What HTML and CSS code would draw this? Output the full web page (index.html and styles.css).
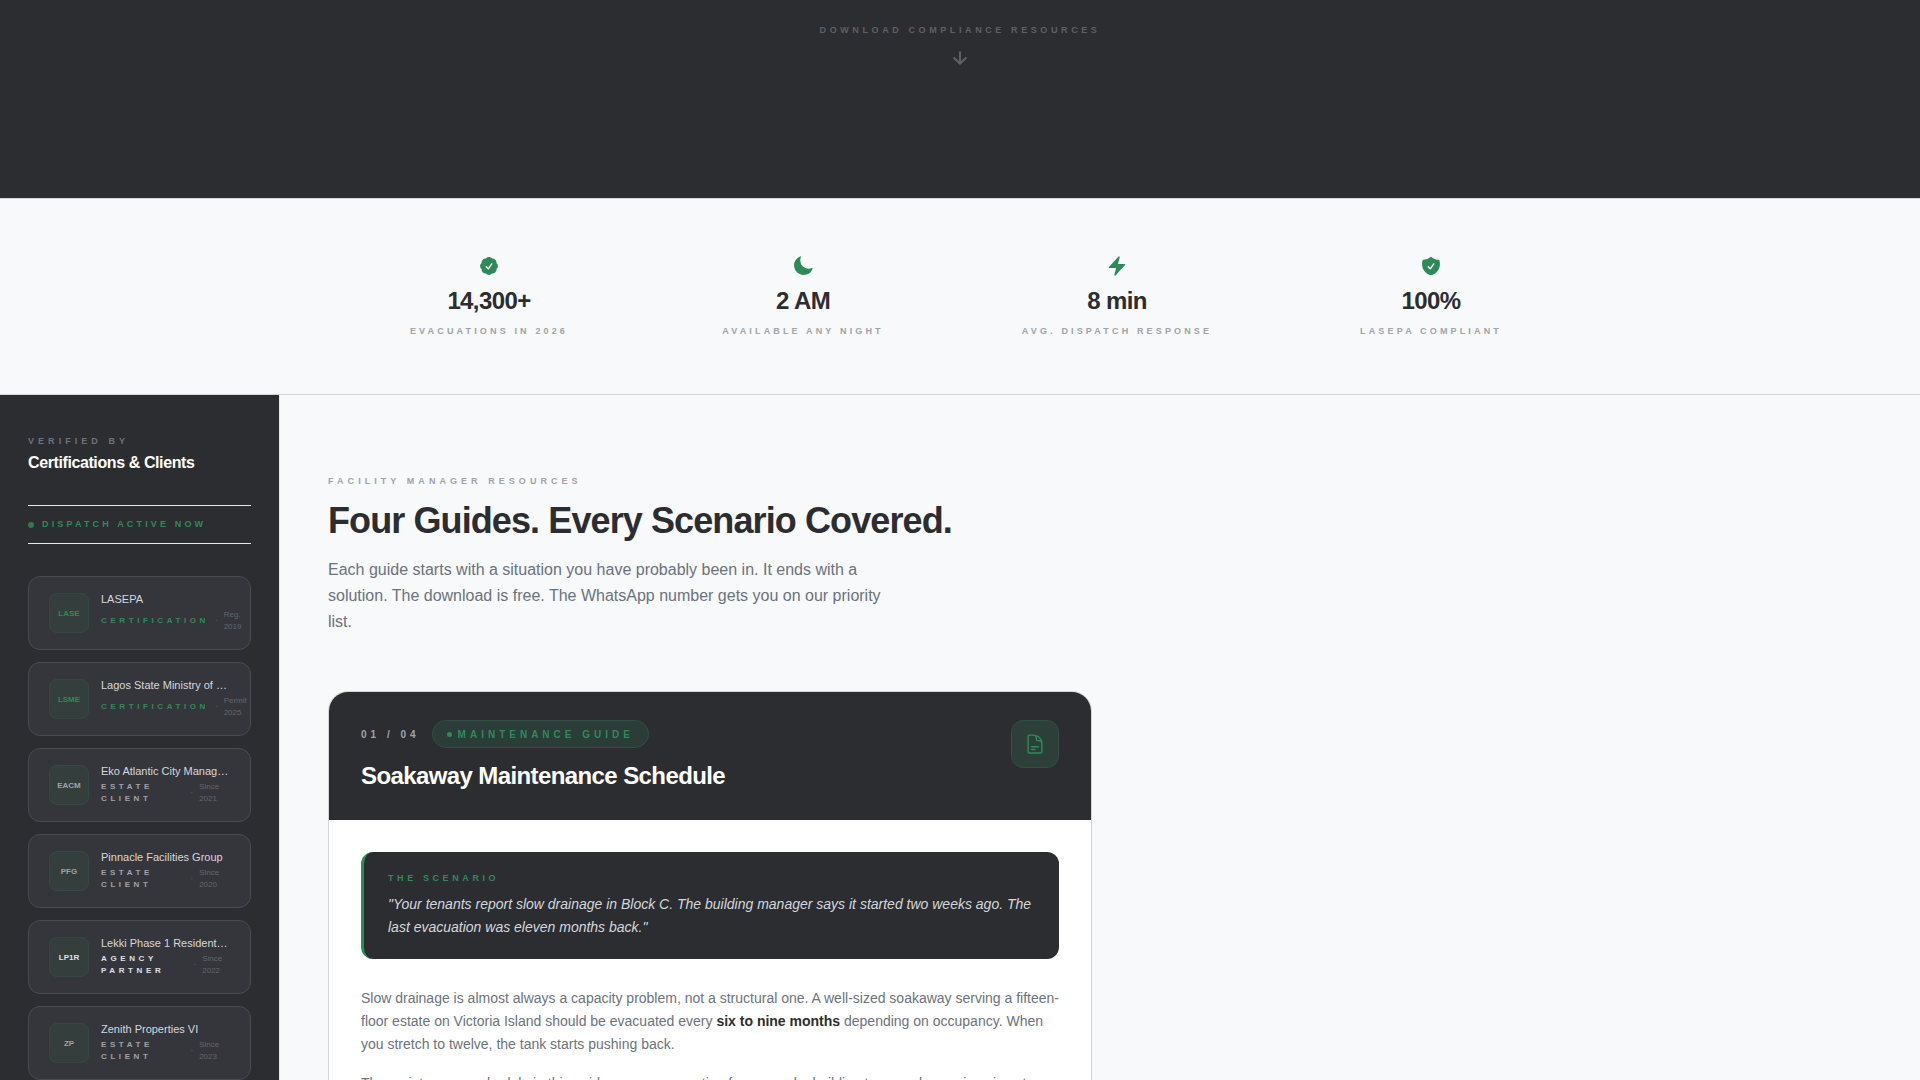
FILE: index.html
```html
<!DOCTYPE html>
<html lang="en">
<head>
  <meta charset="UTF-8">
  <meta name="viewport" content="width=device-width, initial-scale=1.0">
  <title>Compliance Resources</title>
  <link rel="stylesheet" href="styles.css">
</head>
<body>
  <header class="hero">
    <span class="hero-label">Download Compliance Resources</span>
    <svg class="hero-arrow" viewBox="0 0 24 24" fill="none" stroke="currentColor" stroke-width="2.5" stroke-linecap="round" stroke-linejoin="round"><path d="M12 5v14M19 12l-7 7-7-7"/></svg>
  </header>

  <section class="stats">
    <div class="stats-grid">
      <div class="stat">
        <svg viewBox="0 0 24 24" fill="currentColor" fill-rule="evenodd"><path d="M8.603 3.799A4.49 4.49 0 0112 2.25c1.357 0 2.573.6 3.397 1.549a4.49 4.49 0 013.498 1.307 4.491 4.491 0 011.307 3.497A4.49 4.49 0 0121.75 12a4.49 4.49 0 01-1.549 3.397 4.491 4.491 0 01-1.307 3.497 4.491 4.491 0 01-3.497 1.307A4.49 4.49 0 0112 21.75a4.49 4.49 0 01-3.397-1.549 4.49 4.49 0 01-3.498-1.306 4.491 4.491 0 01-1.307-3.498A4.49 4.49 0 012.25 12c0-1.357.6-2.573 1.549-3.397a4.49 4.49 0 011.307-3.497 4.49 4.49 0 013.497-1.307zm7.007 6.387a.75.75 0 10-1.22-.872l-3.236 4.53L9.53 12.22a.75.75 0 00-1.06 1.06l2.25 2.25a.75.75 0 001.14-.094l3.75-5.25z"/></svg>
        <strong class="stat-value">14,300+</strong>
        <span class="stat-label">Evacuations in 2026</span>
      </div>
      <div class="stat">
        <svg viewBox="0 0 24 24" fill="currentColor"><path d="M9.528 1.718a.75.75 0 01.162.819A8.97 8.97 0 009 6a9 9 0 009 9 8.97 8.97 0 003.463-.69.75.75 0 01.981.98 10.503 10.503 0 01-9.694 6.46c-5.799 0-10.5-4.701-10.5-10.5 0-4.368 2.667-8.112 6.46-9.694a.75.75 0 01.818.162z"/></svg>
        <strong class="stat-value">2 AM</strong>
        <span class="stat-label">Available Any Night</span>
      </div>
      <div class="stat">
        <svg viewBox="0 0 24 24" fill="currentColor"><path d="M14.615 1.595a.75.75 0 01.359.852L12.982 9.75h7.268a.75.75 0 01.548 1.262l-10.5 11.25a.75.75 0 01-1.272-.71l1.992-7.302H3.75a.75.75 0 01-.548-1.262l10.5-11.25a.75.75 0 01.913-.143z"/></svg>
        <strong class="stat-value">8 min</strong>
        <span class="stat-label">Avg. Dispatch Response</span>
      </div>
      <div class="stat">
        <svg viewBox="0 0 24 24" fill="currentColor" fill-rule="evenodd"><path d="M12.516 2.17a.75.75 0 00-1.032 0 11.209 11.209 0 01-7.877 3.08.75.75 0 00-.722.515A12.74 12.74 0 002.25 9.75c0 5.942 4.064 10.933 9.563 12.348a.749.749 0 00.374 0c5.499-1.415 9.563-6.406 9.563-12.348 0-1.39-.223-2.73-.635-3.985a.75.75 0 00-.722-.516l-.143.001c-2.996 0-5.717-1.17-7.734-3.08zm3.094 8.016a.75.75 0 10-1.22-.872l-3.236 4.53L9.53 12.22a.75.75 0 00-1.06 1.06l2.25 2.25a.75.75 0 001.14-.094l3.75-5.25z"/></svg>
        <strong class="stat-value">100%</strong>
        <span class="stat-label">LASEPA Compliant</span>
      </div>
    </div>
  </section>

  <div class="layout">
    <aside class="sidebar">
      <p class="sidebar-label">Verified By</p>
      <h2 class="sidebar-title">Certifications &amp; Clients</h2>
      <p class="status">Dispatch Active Now</p>

      <ul class="clients">
        <li class="client certification">
          <span class="client-badge">LASE</span>
          <div class="client-info">
            <p class="client-name">LASEPA</p>
            <p class="client-meta"><span class="client-type">Certification</span><span class="sep">·</span><span>Reg. 2019</span></p>
          </div>
        </li>
        <li class="client certification">
          <span class="client-badge">LSME</span>
          <div class="client-info">
            <p class="client-name">Lagos State Ministry of Environment</p>
            <p class="client-meta"><span class="client-type">Certification</span><span class="sep">·</span><span>Permit 2025</span></p>
          </div>
        </li>
        <li class="client">
          <span class="client-badge">EACM</span>
          <div class="client-info">
            <p class="client-name">Eko Atlantic City Management</p>
            <p class="client-meta"><span class="client-type">Estate Client</span><span class="sep">·</span><span>Since 2021</span></p>
          </div>
        </li>
        <li class="client">
          <span class="client-badge">PFG</span>
          <div class="client-info">
            <p class="client-name">Pinnacle Facilities Group</p>
            <p class="client-meta"><span class="client-type">Estate Client</span><span class="sep">·</span><span>Since 2020</span></p>
          </div>
        </li>
        <li class="client agency">
          <span class="client-badge">LP1R</span>
          <div class="client-info">
            <p class="client-name">Lekki Phase 1 Residents Association</p>
            <p class="client-meta"><span class="client-type">Agency Partner</span><span class="sep">·</span><span>Since 2022</span></p>
          </div>
        </li>
        <li class="client">
          <span class="client-badge">ZP</span>
          <div class="client-info">
            <p class="client-name">Zenith Properties VI</p>
            <p class="client-meta"><span class="client-type">Estate Client</span><span class="sep">·</span><span>Since 2023</span></p>
          </div>
        </li>
      </ul>
    </aside>

    <main class="content">
      <p class="section-label">Facility Manager Resources</p>
      <h1>Four Guides. Every Scenario Covered.</h1>
      <p class="intro">Each guide starts with a situation you have probably been in. It ends with a solution. The download is free. The WhatsApp number gets you on our priority list.</p>

      <div class="guides">
        <article class="guide">
          <div class="guide-header">
            <div>
              <div class="guide-tags">
                <span class="guide-number">01 / 04</span>
                <span class="pill">Maintenance Guide</span>
              </div>
              <h2 class="guide-title">Soakaway Maintenance Schedule</h2>
            </div>
            <div class="guide-icon">
              <svg viewBox="0 0 24 24" fill="none" stroke="currentColor" stroke-width="1.5" stroke-linecap="round" stroke-linejoin="round"><path d="M19.5 14.25v-2.625a3.375 3.375 0 00-3.375-3.375h-1.5A1.125 1.125 0 0113.5 7.125v-1.5a3.375 3.375 0 00-3.375-3.375H8.25m0 12.75h7.5m-7.5 3H12M10.5 2.25H5.625c-.621 0-1.125.504-1.125 1.125v17.25c0 .621.504 1.125 1.125 1.125h12.75c.621 0 1.125-.504 1.125-1.125V11.25a9 9 0 00-9-9z"/></svg>
            </div>
          </div>
          <div class="guide-body">
            <blockquote class="scenario">
              <p class="scenario-label">The Scenario</p>
              <p class="scenario-text">"Your tenants report slow drainage in Block C. The building manager says it started two weeks ago. The last evacuation was eleven months back."</p>
            </blockquote>
            <p>Slow drainage is almost always a capacity problem, not a structural one. A well-sized soakaway serving a fifteen-floor estate on Victoria Island should be evacuated every <strong>six to nine months</strong> depending on occupancy. When you stretch to twelve, the tank starts pushing back.</p>
            <p>The maintenance schedule in this guide covers evacuation frequency by building type, early warning signs to</p>
          </div>
        </article>
      </div>
    </main>
  </div>
</body>
</html>
```

FILE: styles.css
```css
* {
  box-sizing: border-box;
  margin: 0;
  padding: 0;
}
body {
  font-family: "Liberation Sans", Arial, sans-serif;
  background: #f7f9fb;
  color: #2c2d31;
}
ul {
  list-style: none;
}

/* shared small caps style */
.hero-label, .stat-label, .sidebar-label, .status, .section-label, .scenario-label {
  font-size: 9px;
  line-height: 13px;
  font-weight: bold;
  text-transform: uppercase;
}
h1, h2, .stat-value {
  letter-spacing: -0.025em;
}

/* hero */
.hero {
  display: flex;
  flex-direction: column;
  align-items: center;
  gap: 11px;
  padding: 24px 24px 130px;
  background: #2c2d31;
  color: #5f6064;
}
.hero-label {
  letter-spacing: 0.4em;
}
.hero-arrow {
  width: 20px;
  height: 20px;
}

/* stats */
.stats {
  padding: 56px 24px;
  border-top: 1px solid #d4d6da;
  border-bottom: 1px solid #d4d6da;
}
.stats-grid {
  display: grid;
  grid-template-columns: repeat(4, 1fr);
  gap: 24px;
  max-width: 1232px;
  margin: 0 auto;
}
.stat {
  display: flex;
  flex-direction: column;
  align-items: center;
}
.stat svg {
  width: 22px;
  height: 22px;
  color: #2e8b57;
}
.stat-value {
  margin: 12px 0;
  font-size: 24px;
  line-height: 24px;
}
.stat-label {
  letter-spacing: 0.35em;
  color: #a0a3a9;
}

/* layout */
.layout {
  display: flex;
}
.sidebar {
  flex: none;
  width: 280px;
  padding: 40px 28px 0;
  background: #2c2d31;
  border-right: 1px solid #e5e7eb;
}
.sidebar-label {
  letter-spacing: 0.45em;
  color: #6b7280;
}
.sidebar-title {
  margin: 5px 0 32px;
  font-size: 16px;
  line-height: 20px;
  color: #fff;
}
.status {
  display: flex;
  align-items: center;
  gap: 8px;
  padding: 12px 0;
  margin-bottom: 32px;
  border-top: 1px solid #e5e7eb;
  border-bottom: 1px solid #e5e7eb;
  letter-spacing: 0.35em;
  color: #2e8b57;
}
.status::before {
  content: "";
  width: 6px;
  height: 6px;
  border-radius: 50%;
  background: #2e7a53;
}

.clients {
  display: flex;
  flex-direction: column;
  gap: 12px;
}
.client {
  display: flex;
  gap: 12px;
  padding: 16px 20px;
  background: #35363c;
  border: 1px solid #4a4b50;
  border-radius: 12px;
}
.client-badge {
  display: flex;
  flex: 0 0 40px;
  align-items: center;
  justify-content: center;
  height: 40px;
  background: #333e3d;
  border: 1px solid #324a43;
  border-radius: 8px;
  font-size: 8px;
  font-weight: bold;
  color: #a0a3a9;
}
.client-info {
  flex: 1;
  min-width: 0;
}
.client-name {
  overflow: hidden;
  margin-bottom: 4px;
  font-size: 11px;
  line-height: 12px;
  white-space: nowrap;
  text-overflow: ellipsis;
  color: #d5d7db;
}
.client-meta {
  display: flex;
  align-items: center;
  gap: 6px;
  font-size: 8px;
  line-height: 12px;
  color: #63656c;
}
.client-type {
  font-weight: bold;
  letter-spacing: 0.45em;
  text-transform: uppercase;
  color: #a0a3a9;
}
.certification .client-badge, .certification .client-type {
  color: #2e8b57;
}
.agency .client-badge, .agency .client-type {
  color: #dfe1e4;
}

/* content */
.content {
  flex: 1;
  min-width: 0;
  padding: 80px 48px 0;
}
.section-label {
  letter-spacing: 0.45em;
  color: #a0a3a9;
}
h1 {
  margin: 13px 0 16px;
  font-size: 36px;
  line-height: 40px;
}
.intro {
  max-width: 560px;
  margin-bottom: 56px;
  font-size: 16px;
  line-height: 26px;
  color: #6b7280;
}

/* guides */
.guides {
  display: grid;
  grid-template-columns: repeat(2, 1fr);
  gap: 16px;
}
.guide {
  overflow: hidden;
  background: #fff;
  border: 1px solid #d4d6da;
  border-radius: 20px;
}
.guide-header {
  display: flex;
  justify-content: space-between;
  padding: 28px 32px;
  background: #2c2d31;
}
.guide-tags {
  display: flex;
  align-items: center;
  gap: 12px;
  margin-bottom: 12px;
  font-size: 10px;
  font-weight: bold;
  letter-spacing: 0.4em;
}
.guide-number {
  color: #a0a3a9;
}
.pill {
  display: flex;
  align-items: center;
  gap: 6px;
  height: 28px;
  padding: 0 14px;
  background: #2c3c38;
  border: 1px solid #2d5142;
  border-radius: 14px;
  text-transform: uppercase;
  color: #2e8b57;
}
.pill::before {
  content: "";
  width: 5px;
  height: 5px;
  border-radius: 50%;
  background: #2e8b57;
}
.guide-title {
  font-size: 24px;
  line-height: 32px;
  color: #fff;
}
.guide-icon {
  display: flex;
  align-items: center;
  justify-content: center;
  width: 48px;
  height: 48px;
  background: #2c4039;
  border: 1px solid #2d5142;
  border-radius: 12px;
  color: #2e8b57;
}
.guide-icon svg {
  width: 22px;
  height: 22px;
}
.guide-body {
  padding: 32px;
  font-size: 14px;
  line-height: 23px;
  color: #6b7280;
}
.guide-body > p {
  margin-bottom: 16px;
}
.guide-body strong {
  color: #2c2d31;
}
.scenario {
  padding: 20px 24px;
  margin-bottom: 28px;
  background: #2c2d31;
  border-left: 3px solid #2e8b57;
  border-radius: 12px;
}
.scenario-label {
  margin-bottom: 8px;
  letter-spacing: 0.4em;
  color: #2e8b57;
}
.scenario-text {
  font-style: italic;
  color: #d5d7db;
}
```
